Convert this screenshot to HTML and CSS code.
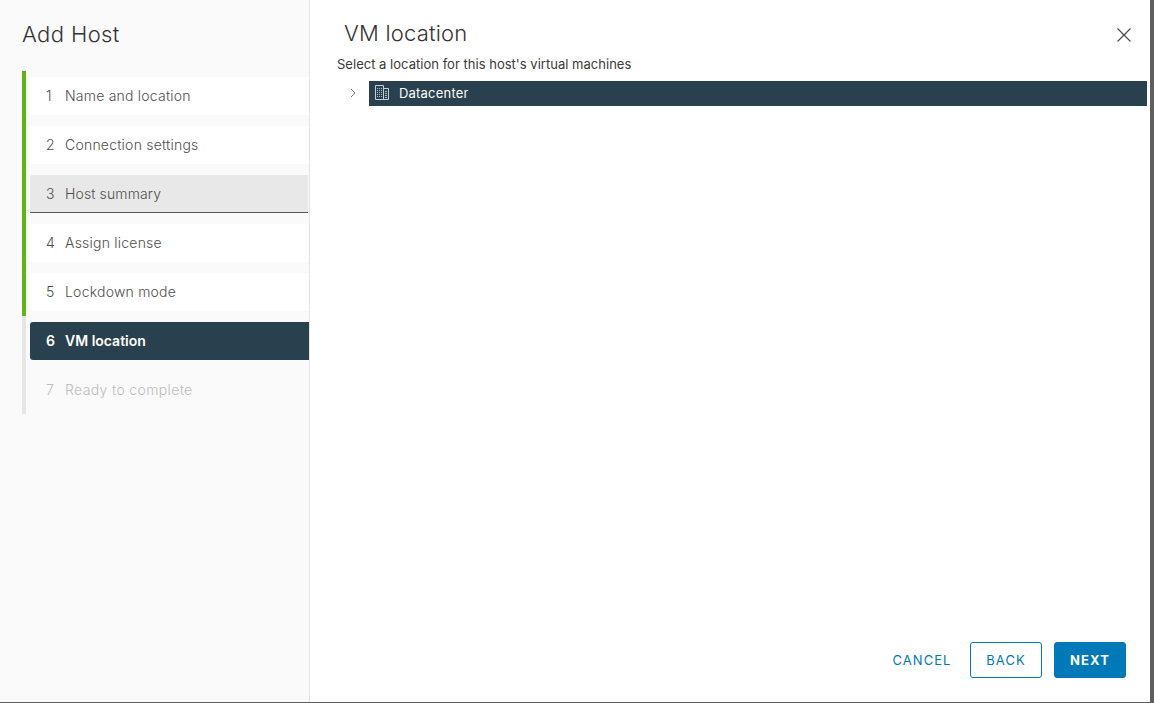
FILE: index.html
```html
<!DOCTYPE html>
<html lang="en">
<head>
<meta charset="utf-8">
<title>Add Host</title>
<link rel="stylesheet" href="styles.css">
</head>
<body>
<div class="modal">
  <aside class="sidebar">
    <h1 class="wizard-title">Add Host</h1>
    <ol class="steps">
      <li class="step done"><div class="step-btn"><span class="num">1</span><span>Name and location</span></div></li>
      <li class="step done"><div class="step-btn"><span class="num">2</span><span>Connection settings</span></div></li>
      <li class="step done"><div class="step-btn hover"><span class="num">3</span><span>Host summary</span></div></li>
      <li class="step done"><div class="step-btn"><span class="num">4</span><span>Assign license</span></div></li>
      <li class="step done"><div class="step-btn"><span class="num">5</span><span>Lockdown mode</span></div></li>
      <li class="step"><div class="step-btn current"><span class="num">6</span><span>VM location</span></div></li>
      <li class="step"><div class="step-btn disabled"><span class="num">7</span><span>Ready to complete</span></div></li>
    </ol>
  </aside>
  <main class="content">
    <header class="content-head">
      <h2 class="page-title">VM location</h2>
      <button class="close" aria-label="Close">
        <svg width="16" height="16" viewBox="0 0 16 16"><path d="M1.5 1.5l13 13M14.5 1.5l-13 13" stroke="#4a4a4a" stroke-width="1.2" fill="none"/></svg>
      </button>
    </header>
    <p class="hint">Select a location for this host's virtual machines</p>
    <div class="tree-row">
      <span class="caret">
        <svg width="8" height="10" viewBox="0 0 8 10"><path d="M2 1l4 4-4 4" stroke="#777" stroke-width="1" fill="none"/></svg>
      </span>
      <div class="tree-node">
        <svg class="dc-icon" width="16" height="16" viewBox="0 0 16 16" fill="none" stroke="#c3d0d8" stroke-width="1">
          <path d="M1.5 .5h8v14h-8zM9.5 3.5h5v11h-5z"/>
          <path stroke="#aebcc4" d="M3 3.5h1M5 3.5h1M7 3.5h1M3 5.5h1M5 5.5h1M7 5.5h1M3 7.5h1M5 7.5h1M7 7.5h1M3 9.5h1M5 9.5h1M7 9.5h1M3 11.5h1M5 11.5h1M7 11.5h1M11 6.5h2M11 8.5h2M11 10.5h2M11 12.5h2"/>
        </svg>
        <span>Datacenter</span>
      </div>
    </div>
    <footer class="actions">
      <button class="btn link">CANCEL</button>
      <button class="btn outline">BACK</button>
      <button class="btn primary">NEXT</button>
    </footer>
  </main>
</div>
</body>
</html>
```
FILE: styles.css
```css
* { box-sizing: border-box; }
html, body { margin: 0; height: 100%; }
body {
  background: #5f5f5f;
  font-family: "Inter", "Liberation Sans", sans-serif;
  overflow: hidden;
}
.modal {
  display: flex;
  width: 1150px;
  height: 702px;
  background: #fff;
}
.sidebar {
  flex: 0 0 310px;
  background: #fafafa;
  border-right: 1px solid #e3e3e3;
  padding: 20px 0 0 22px;
}
.wizard-title {
  margin: 0 0 23px;
  font-size: 22px;
  line-height: 28px;
  font-weight: 300;
  letter-spacing: 0.4px;
  color: #333;
}
.steps { list-style: none; margin: 0; padding: 0; }
.step {
  height: 49px;
  padding: 6px 0 5px 4px;
  border-left: 4px solid #e6e6e6;
}
.step.done { border-left-color: #60b515; }
.step-btn {
  display: flex;
  align-items: center;
  height: 38px;
  padding: 0 0 2px 16px;
  background: #fff;
  font-size: 14px;
  font-weight: 300;
  letter-spacing: 0.22px;
  color: #4f4f4f;
}
.step-btn .num { width: 19px; }
.step-btn.hover {
  background: #e8e8e8;
  border-bottom: 1px solid #565656;
  border-radius: 3px 0 0 0;
  margin-right: 1px;
  padding-bottom: 0;
  letter-spacing: 0.12px;
}
.step-btn.current {
  background: #29414e;
  color: #fff;
  font-weight: 600;
  letter-spacing: 0;
  border-radius: 3px 0 0 3px;
}
.step-btn.disabled { background: transparent; color: #bdbdbd; letter-spacing: 0.36px; }
.content {
  flex: 1;
  display: flex;
  flex-direction: column;
  padding: 0 3px 24px 27px;
  min-width: 0;
}
.content-head {
  display: flex;
  justify-content: space-between;
  align-items: center;
  height: 56px;
  padding: 9px 15px 0 7px;
}
.page-title {
  margin: 0;
  font-size: 22px;
  font-weight: 300;
  letter-spacing: 0.2px;
  color: #333;
}
.close { border: 0; background: none; padding: 0; display: flex; margin-top: 5px; }
.hint {
  margin: 0;
  font-size: 13px;
  line-height: 17px;
  letter-spacing: 0.02px;
  color: #3a3a3a;
}
.tree-row {
  display: flex;
  align-items: flex-start;
  height: 25px;
  margin-top: 8px;
}
.caret { flex: 0 0 32px; display: flex; padding: 7px 0 0 12px; }
.tree-node {
  flex: 1;
  display: flex;
  align-items: center;
  height: 25px;
  padding: 0 0 2px 5px;
  background: #29414e;
  color: #fff;
  font-size: 13px;
  letter-spacing: 0.2px;
}
.dc-icon { margin-right: 9px; }
.actions {
  margin-top: auto;
  display: flex;
  justify-content: flex-end;
  align-items: center;
  gap: 12px;
  padding-right: 21px;
}
.btn {
  height: 36px;
  border-radius: 3px;
  font: 400 13px "Inter", "Liberation Sans", sans-serif;
  letter-spacing: 1.05px;
  width: 72px;
  padding: 0;
  background: transparent;
  border: 1px solid transparent;
}
.btn.link { color: #0079b8; width: 64px; margin-right: 4px; }
.btn.outline { color: #0079b8; border-color: #0079b8; }
.btn.primary { color: #fff; background: #0079b8; border-color: #0079b8; font-weight: 700; }
```
